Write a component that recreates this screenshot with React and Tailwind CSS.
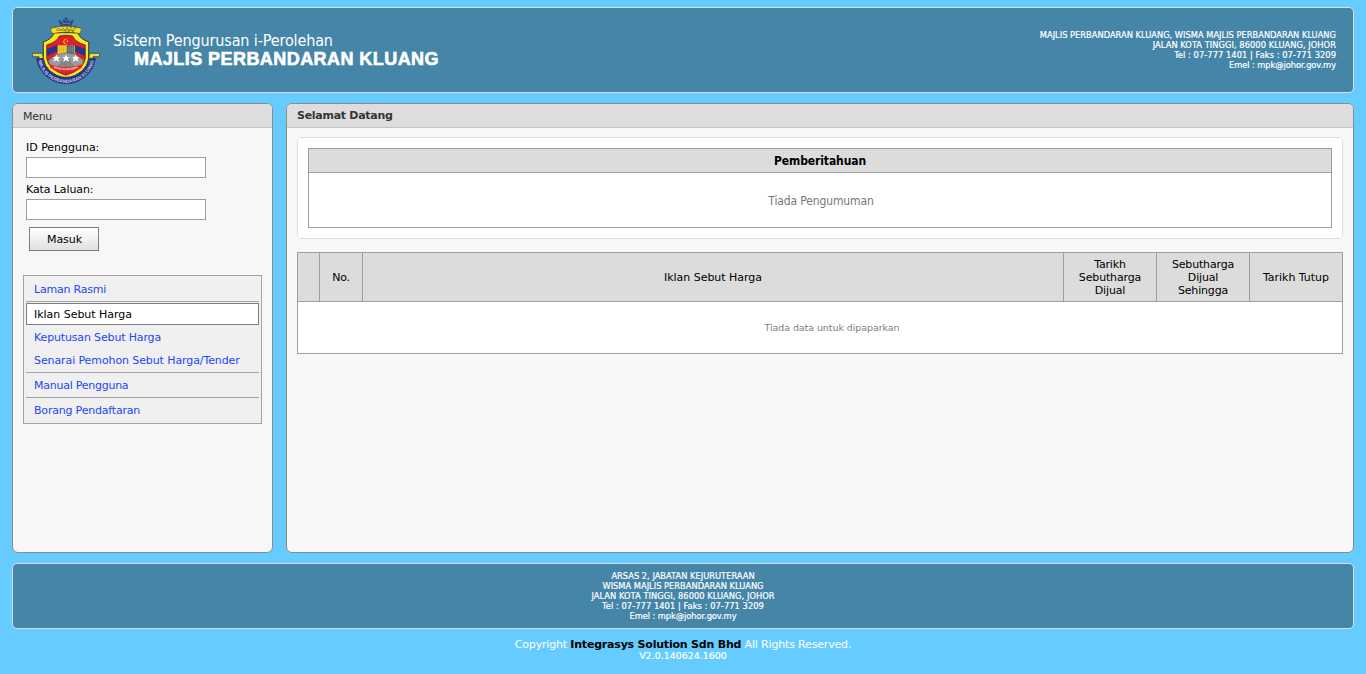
function Crest() {
  return (
    <svg viewBox="0 0 252 240" className="h-[80px] w-[84px] shrink-0" aria-hidden="true">
      <g fill="#2b3f8c">
        <path d="M110 47 L104 33 L114 37 L119 28 L126 34 L133 28 L138 37 L148 33 L142 47Z" />
        <circle cx="126" cy="26" r="4" />
        <path d="M104 30h6v5h-6zM142 30h6v5h-6z" />
      </g>
      <path d="M112 42 Q126 38 140 42M117 36h4M131 36h4" stroke="#8e94a0" strokeWidth="2" fill="none" />
      <path d="M90 68 L162 68 Q166 86 194 96 L194 145 Q189 190 126 206 Q63 190 58 145 L58 96 Q86 86 90 68Z" fill="#f9e71e" stroke="#23221f" strokeWidth="2.5" />
      <path d="M106 78 Q126 73 146 78 Q153 96 184 105 L184 145 Q178 180 126 196 Q74 180 68 145 L68 105 Q99 96 106 78Z" fill="#e21e2b" stroke="#262330" strokeWidth="2" />
      <path d="M69 116 L101 105 V124 L69 138ZM151 105 L183 116 V138 L151 124Z" fill="#27348c" />
      <path d="M101 106 H153 V138 H101Z" fill="#f5d522" />
      <path d="M128 106 H151 V134 H128Z" fill="#465a86" />
      <path d="M134 107v25M140 107v25M146 107v25M128 114h23M128 121h23" stroke="#c7b956" strokeWidth="1.2" />
      <path d="M107 107v25M113 107v25M119 107v25M101 114h25M101 121h25" stroke="#b98f1d" strokeWidth="1" />
      <path d="M74 150 L101 133 L126 128 L153 133 L178 150 L176 164 L158 176 L94 176 L76 164Z" fill="#9b9c9a" stroke="#6e706f" strokeWidth="2" />
      <path d="M111 157 L126 130 L141 157 L158 174 H94Z" fill="#83878a" />
      <path d="M130 88 A8 8 0 1 0 132 100 A7 7 0 1 1 130 88Z" fill="#f8de25" />
      <circle cx="130" cy="94" r="2.5" fill="#f8de25" />
      {[97, 126, 155].map((x) => (
        <path key={x} transform={"translate(" + x + " 145)"} d="M0-12 L3.5-4 11-4 5.5 1.5 9 10 0 5.5-9 10-5.5 1.5-11-4-3.5-4Z" fill="#fff" />
      ))}
      <path d="M75 161 Q98 171 126 171 Q154 171 177 161 L173 174 Q152 185 126 185 Q100 185 79 174Z" fill="#e9272d" />
      <path id="motto" d="M80 170 Q126 190 172 170" fill="none" />
      <text fontSize="8" fontWeight="700" fill="#fff" fontFamily="Liberation Sans, sans-serif">
        <textPath href="#motto" startOffset="50%" textAnchor="middle">MAJU SEJAHTERA</textPath>
      </text>
      <path d="M84 54 Q77 59 82 65 Q80 72 90 70 Q126 62 162 70 Q172 72 170 65 Q175 59 168 54 Q126 43 84 54Z" fill="#f4df2b" stroke="#4a4930" strokeWidth="2" />
      <path d="M95 57q3 5 7 0t6 1 6-1 6 2 6-3 6 3 6-3 6 3 6-2 6 1M99 62q8-3 14-1t12-1 14 1 12 0" stroke="#554c1c" strokeWidth="1.6" fill="none" />
      <path d="M37 145 A90 90 0 0 0 215 145 L196 143 A71 70 0 0 1 56 143Z" fill="#24378f" stroke="#1c2a72" strokeWidth="1" />
      <path d="M25 130 L55 130 L58 144 L46 146 L45 140 L26 140ZM227 130 L197 130 L194 144 L206 146 L207 140 L226 140Z" fill="#f3dc28" stroke="#222d55" strokeWidth="2" />
      <path id="ribbon" d="M42 149 A85.5 85.5 0 0 0 210 149" fill="none" />
      <text fontSize="14" fontWeight="700" fill="#c9cbd6" fontFamily="Liberation Sans, sans-serif">
        <textPath href="#ribbon" startOffset="50%" textAnchor="middle">MAJLIS PERBANDARAN KLUANG</textPath>
      </text>
    </svg>
  );
}

const menu = [
  { label: "Laman Rasmi", box: "h-[25px] border-b border-[#a3a3a3] tracking-[-0.22px]" },
  { label: "Iklan Sebut Harga", box: "mt-px h-[22px] border border-[#7f7f7f] bg-white text-black tracking-[-0.03px]", active: true },
  { label: "Keputusan Sebut Harga", box: "mt-px h-[23px] tracking-[-0.15px]" },
  { label: "Senarai Pemohon Sebut Harga/Tender", box: "h-[23px] tracking-[-0.1px]" },
  { label: "Manual Pengguna", box: "border-t border-[#a3a3a3] h-[25px] tracking-[-0.25px]" },
  { label: "Borang Pendaftaran", box: "border-t border-[#a3a3a3] h-[25px] tracking-[-0.2px]" },
];

export default function App() {
  return (
    <div className="flex h-[674px] w-[1366px] flex-col overflow-hidden bg-[#66ccff] px-3 pt-[7px] font-['DejaVu_Sans',sans-serif] text-[11px]">
      <header className="flex h-[86px] shrink-0 rounded-[5px] border border-[#ddd] bg-[#4485a8] pl-[11px] pt-[2px] text-white">
        <Crest />
        <div className="ml-[5px] flex flex-col items-start whitespace-nowrap pt-[21px]">
          <span className="font-['DejaVu_Sans_Condensed',sans-serif] text-[16px] leading-[19px] tracking-[-0.13px]">Sistem Pengurusan i-Perolehan</span>
          <span className="ml-[21px] font-['Liberation_Sans',sans-serif] text-[18px] font-bold leading-[18px] tracking-[0.44px] [-webkit-text-stroke:0.6px_#fff]">MAJLIS PERBANDARAN KLUANG</span>
        </div>
        <div className="ml-auto flex flex-col items-end whitespace-nowrap pr-[17px] pt-[20px] text-[8.3px] leading-[10px] [-webkit-text-stroke:0.2px_#fff]">
          <span>MAJLIS PERBANDARAN KLUANG, WISMA MAJLIS PERBANDARAN KLUANG</span>
          <span className="tracking-[0.04px]">JALAN KOTA TINGGI, 86000 KLUANG, JOHOR</span>
          <span className="tracking-[0.055px]">Tel : 07-777 1401 | Faks : 07-771 3209</span>
          <span className="tracking-[-0.065px]">Emel : mpk@johor.gov.my</span>
        </div>
      </header>
      <div className="mt-[10px] flex h-[450px] shrink-0 gap-[13px]">
        <aside className="w-[261px] shrink-0 overflow-hidden rounded-[6px] border border-[#8b8b8b] bg-[#f7f7f7]">
          <div className="flex h-6 items-center border-b border-[#c3c3c3] bg-[#ddd] pl-[10px] pt-[3px] tracking-[-0.3px] text-[#333]">Menu</div>
          <div className="pl-[13px] pt-[13px]">
            <div className="h-4 leading-[13px] tracking-[-0.02px]">ID Pengguna:</div>
            <input className="block h-[21px] w-[180px] border border-[#9f9f9f] bg-white" />
            <div className="mt-[5px] h-4 leading-[13px] tracking-[-0.1px]">Kata Laluan:</div>
            <input className="block h-[21px] w-[180px] border border-[#9f9f9f] bg-white" />
            <button className="ml-[3px] mt-[7px] h-6 w-[70px] border border-[#7f7f7f] bg-linear-to-b from-white to-[#e0e0e0] pl-px pt-[2px] tracking-[-0.06px]">Masuk</button>
          </div>
          <nav className="ml-[10px] mt-6 flex h-[149px] w-[239px] flex-col border border-[#a3a3a3] bg-[#f0f0f0] px-[2px] pt-[1px] text-[#1e46f5]">
            {menu.map((m) => (
              <a key={m.label} className={"flex shrink-0 items-center whitespace-nowrap pt-[2px] " + (m.active ? "pl-[7px] " : "pl-2 ") + m.box}>{m.label}</a>
            ))}
          </nav>
        </aside>
        <main className="w-[1068px] shrink-0 overflow-hidden rounded-[6px] border border-[#8b8b8b] bg-[#f7f7f7]">
          <div className="flex h-6 items-center border-b border-[#c3c3c3] bg-[#ddd] pl-[10px] pt-[2px] font-bold tracking-[-0.28px] text-[#333]">Selamat Datang</div>
          <div className="px-[10px] pt-[9px]">
            <section className="h-[102px] rounded-[5px] border border-[#ddd] bg-white p-[10px] text-center font-['DejaVu_Sans_Condensed',sans-serif] text-[12px]">
              <div className="h-[80px] border border-[#9f9f9f]">
                <div className="flex h-6 items-center justify-center border-b border-[#9f9f9f] bg-[#dcdcdc] font-bold tracking-[-0.1px]">Pemberitahuan</div>
                <div className="flex h-[54px] items-center justify-center pl-[2px] pt-[2px] tracking-[-0.12px] text-[#777]">Tiada Pengumuman</div>
              </div>
            </section>
            <section className="mt-[13px] h-[102px] border border-[#9f9f9f] bg-white text-center">
              <div className="grid h-[49px] grid-cols-[22px_43px_701px_93px_93px_92px] border-b border-[#9f9f9f] bg-[#dcdcdc] leading-[13px] [&>div]:flex [&>div]:flex-col [&>div]:items-center [&>div]:justify-center [&>div:not(:last-child)]:border-r [&>div]:border-[#9f9f9f]">
                <div />
                <div className="tracking-[-0.2px]">No.</div>
                <div className="tracking-[-0.03px]">Iklan Sebut Harga</div>
                <div className="tracking-[-0.15px]"><span>Tarikh</span><span>Sebutharga</span><span>Dijual</span></div>
                <div className="tracking-[-0.17px]"><span>Sebutharga</span><span>Dijual</span><span>Sehingga</span></div>
                <div className="tracking-[-0.03px]">Tarikh Tutup</div>
              </div>
              <div className="flex h-[51px] items-center justify-center pl-[24px] pt-[2px] text-[9.5px] tracking-[-0.075px] text-[#808080]">Tiada data untuk dipaparkan</div>
            </section>
          </div>
        </main>
      </div>
      <footer className="mt-[10px] flex h-[66px] shrink-0 flex-col items-center rounded-[5px] border border-[#ddd] bg-[#4485a8] pt-[7px] text-[8.3px] leading-[10px] text-white [-webkit-text-stroke:0.2px_#fff]">
        <span>ARSAS 2, JABATAN KEJURUTERAAN</span>
        <span>WISMA MAJLIS PERBANDARAN KLUANG</span>
        <span className="tracking-[0.04px]">JALAN KOTA TINGGI, 86000 KLUANG, JOHOR</span>
        <span className="tracking-[0.055px]">Tel : 07-777 1401 | Faks : 07-771 3209</span>
        <span className="tracking-[-0.065px]">Emel : mpk@johor.gov.my</span>
      </footer>
      <div className="flex flex-col items-center pt-[9px] text-white">
        <div className="leading-[13px] tracking-[-0.17px]">Copyright <b className="tracking-[-0.2px] text-black">Integrasys Solution Sdn Bhd</b> All Rights Reserved.</div>
        <span className="text-[9.4px] leading-[10px] tracking-[0.05px] [-webkit-text-stroke:0.2px_#fff]">V2.0.140624.1600</span>
      </div>
    </div>
  );
}
